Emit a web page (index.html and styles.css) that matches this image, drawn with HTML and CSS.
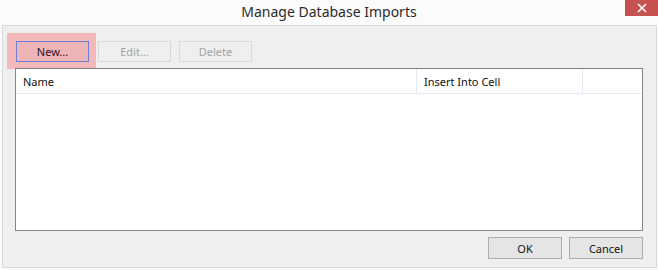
FILE: index.html
```html
<!DOCTYPE html>
<html lang="en">
<head>
  <meta charset="UTF-8">
  <title>Manage Database Imports</title>
  <link rel="stylesheet" href="styles.css">
</head>
<body>

<div class="window">
    <div class="titlebar">
        <span class="title">Manage Database Imports</span>
        <button class="close-btn" aria-label="Close">
            <svg width="10" height="10" viewBox="0 0 10 10">
                <path d="M1 1 L9 9 M9 1 L1 9" stroke="#fff" stroke-width="1.6" fill="none"/>
            </svg>
        </button>
    </div>

    <div class="client">
        <div class="toolbar">
            <div class="highlight">
                <button class="btn btn-focus">New...</button>
            </div>
            <button class="btn" disabled>Edit...</button>
            <button class="btn" disabled>Delete</button>
        </div>

        <div class="list">
            <div class="list-header">
                <div class="col col-name">Name</div>
                <div class="col col-cell">Insert Into Cell</div>
                <div class="col col-rest"></div>
            </div>
        </div>

        <div class="footer">
            <button class="btn btn-normal">OK</button>
            <button class="btn btn-normal">Cancel</button>
        </div>
    </div>
</div>

</body>
</html>
```

FILE: styles.css
```css
* {
    margin: 0;
    padding: 0;
    box-sizing: border-box;
}

body {
    font-family: "Noto Sans", "Open Sans", sans-serif;
    font-size: 11px;
    background: #fbfbfb;
    width: 658px;
    height: 270px;
    overflow: hidden;
}

.window {
    position: relative;
    width: 658px;
    height: 270px;
    display: flex;
    flex-direction: column;
}

.titlebar {
    height: 25px;
    display: flex;
    align-items: center;
    justify-content: center;
}

.title {
    font-size: 14px;
    color: #2b2b2b;
    margin-top: -2px;
}

.close-btn {
    position: absolute;
    top: 0;
    right: 0;
    width: 33px;
    height: 16px;
    border: none;
    background: #c75050;
    display: flex;
    align-items: center;
    justify-content: center;
}

.client {
    margin: 0 1px 2px 2px;
    height: 243px;
    border: 1px solid #d8d8d8;
    background: #efefef;
    display: flex;
    flex-direction: column;
}

.toolbar {
    display: flex;
    align-items: flex-start;
    padding: 7px 0 0 4px;
}

.highlight {
    background: #f4b8ba;
    padding: 8px 7px 6px 9px;
    height: 36px;
    margin-bottom: -1px;
}

.btn {
    font-family: inherit;
    font-size: 11px;
    width: 73px;
    height: 21px;
    border: 1px solid #d9d9d9;
    background: #efefef;
    color: #a3a3a3;
}

.toolbar > .btn {
    margin-top: 8px;
    margin-left: 2px;
}

.toolbar > .btn + .btn {
    margin-left: 8px;
}

.btn-focus {
    border-color: #6b80d6;
    background: #eeb5b8;
    color: #3a0f1c;
}

.list {
    margin: 0 13px 0 12px;
    height: 163px;
    border: 1px solid #838590;
    border-top-color: #7c7f85;
    background: #fff;
    position: relative;
    z-index: 1;
}

.list-header {
    display: flex;
    height: 25px;
    border-bottom: 1px solid #e6ecf6;
    color: #111;
}

.col {
    display: flex;
    align-items: center;
    padding-left: 7px;
    border-right: 1px solid #e6ecf6;
}

.col-name {
    width: 401px;
}

.col-cell {
    width: 166px;
}

.col-rest {
    flex: 1;
    border-right: none;
}

.footer {
    display: flex;
    justify-content: flex-end;
    gap: 7px;
    padding: 6px 13px 0 0;
}

.btn-normal {
    width: 74px;
    height: 22px;
    border-color: #adadad;
    background: #e5e5e5;
    color: #111;
}
```
